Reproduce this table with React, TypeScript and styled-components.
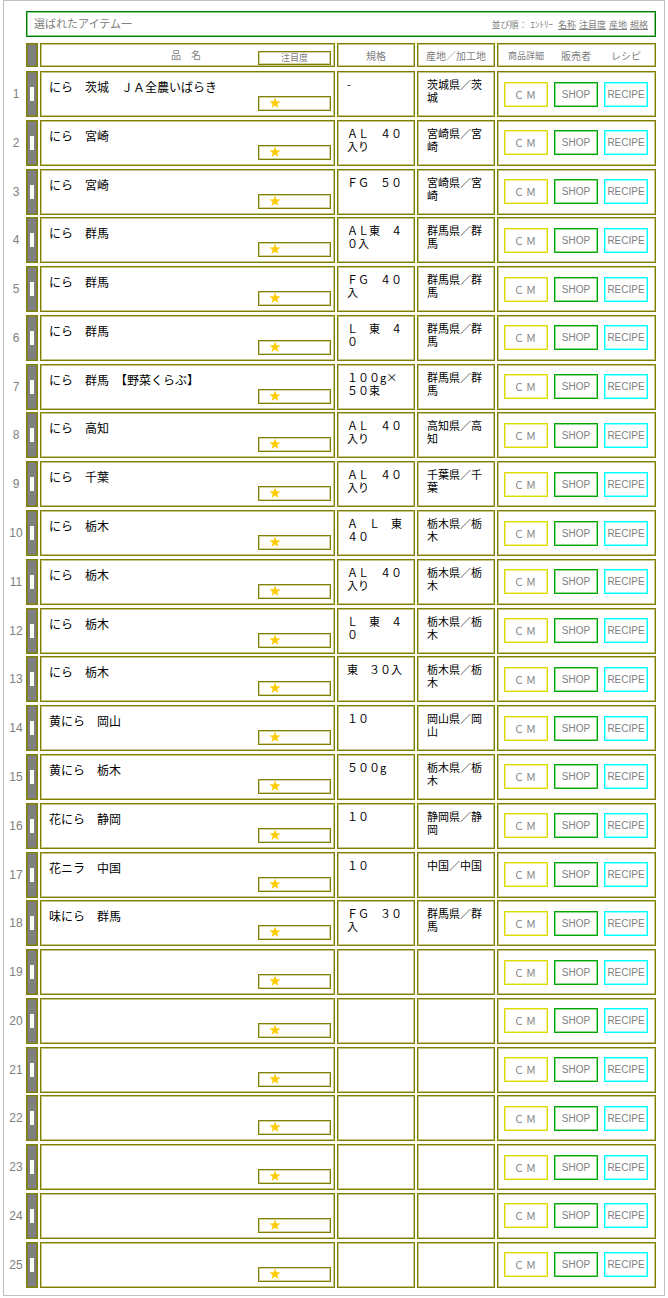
import styled, { createGlobalStyle, css } from "styled-components";

type Item = { name: string; spec: string; origin: string };

const items: Item[] = [
  { name: "にら　茨城　ＪＡ全農いばらき", spec: "-", origin: "茨城県／茨城" },
  { name: "にら　宮崎", spec: "ＡＬ　４０入り", origin: "宮崎県／宮崎" },
  { name: "にら　宮崎", spec: "ＦＧ　５０", origin: "宮崎県／宮崎" },
  { name: "にら　群馬", spec: "ＡＬ東　４０入", origin: "群馬県／群馬" },
  { name: "にら　群馬", spec: "ＦＧ　４０入", origin: "群馬県／群馬" },
  { name: "にら　群馬", spec: "Ｌ　東　４０", origin: "群馬県／群馬" },
  { name: "にら　群馬　【野菜くらぶ】", spec: "１００g×５０束", origin: "群馬県／群馬" },
  { name: "にら　高知", spec: "ＡＬ　４０入り", origin: "高知県／高知" },
  { name: "にら　千葉", spec: "ＡＬ　４０入り", origin: "千葉県／千葉" },
  { name: "にら　栃木", spec: "Ａ　Ｌ　東　４０", origin: "栃木県／栃木" },
  { name: "にら　栃木", spec: "ＡＬ　４０入り", origin: "栃木県／栃木" },
  { name: "にら　栃木", spec: "Ｌ　東　４０", origin: "栃木県／栃木" },
  { name: "にら　栃木", spec: "東　３０入", origin: "栃木県／栃木" },
  { name: "黄にら　岡山", spec: "１０", origin: "岡山県／岡山" },
  { name: "黄にら　栃木", spec: "５００g", origin: "栃木県／栃木" },
  { name: "花にら　静岡", spec: "１０", origin: "静岡県／静岡" },
  { name: "花ニラ　中国", spec: "１０", origin: "中国／中国" },
  { name: "味にら　群馬", spec: "ＦＧ　３０入", origin: "群馬県／群馬" },
];

const rows: Item[] = Array.from({ length: 25 }, (_, i) => items[i] ?? { name: "", spec: "", origin: "" });

// 1px line plus a half-tone inner pixel, reads like the 1.5px lines of the original
const line = (color: string, soft: string) => css`
  border: 1px solid ${color};
  box-shadow: inset 0 0 0 1px ${soft};
`;

const GlobalStyle = createGlobalStyle`
  body {
    margin: 0;
    background: #ffffff;
  }
`;

const Star = () => (
  <svg width="12" height="12" viewBox="0 0 24 24">
    <polygon
      points="12,1 14.9,8.6 23,8.9 16.6,13.9 18.9,21.8 12,17.2 5.1,21.8 7.4,13.9 1,8.9 9.1,8.6"
      fill="#ffcc00"
    />
  </svg>
);

const App = () => {
  return (
    <>
      <GlobalStyle />
      <Frame>
        <TitleBar>
          <Title>選ばれたアイテム一</Title>
          <SortBox>
            並び順：<Half>ｴﾝﾄﾘｰ</Half>
            <SortLink>名称</SortLink>
            <SortLink>注目度</SortLink>
            <SortLink>産地</SortLink>
            <SortLink>規格</SortLink>
          </SortBox>
        </TitleBar>

        <HeaderRow>
          <span />
          <Bar />
          <NameHead>
            <span />
            <HeadLabel>品　名</HeadLabel>
            <AttentionBox>注目度</AttentionBox>
          </NameHead>
          <HeadCell>規格</HeadCell>
          <HeadCell>産地／加工地</HeadCell>
          <ButtonsHead>
            <HeadLabel $size={9}>商品詳細</HeadLabel>
            <HeadLabel>販売者</HeadLabel>
            <HeadLabel>レシピ</HeadLabel>
          </ButtonsHead>
        </HeaderRow>

        <List>
          {rows.map((row, i) => (
            <Row key={i}>
              <RowNumber>{i + 1}</RowNumber>
              <Bar>
                <Handle />
              </Bar>
              <NameCell>
                <NameText>{row.name}</NameText>
                <StarBox>
                  <Star />
                </StarBox>
              </NameCell>
              <TextCell>{row.spec}</TextCell>
              <TextCell>{row.origin}</TextCell>
              <ButtonsCell>
                <LinkButton $color="#dcdc00" $soft="rgba(220,220,0,0.45)" $spaced>
                  ＣＭ
                </LinkButton>
                <LinkButton $color="#00a800" $soft="rgba(0,168,0,0.45)">
                  SHOP
                </LinkButton>
                <LinkButton $color="#00ffff" $soft="rgba(0,255,255,0.45)">
                  RECIPE
                </LinkButton>
              </ButtonsCell>
            </Row>
          ))}
        </List>
      </Frame>
    </>
  );
};

const Frame = styled.div`
  margin-left: 3px;
  width: 662px;
  box-sizing: border-box;
  border: 1px solid #c0c0c0;
  padding: 10px 0 7px 4px;
  font-family: "Noto Sans CJK JP", "Liberation Sans", sans-serif;
`;

const TitleBar = styled.div`
  margin-left: 18px;
  width: 630px;
  height: 26px;
  box-sizing: border-box;
  ${line("#008000", "rgba(0,128,0,0.45)")}
  display: flex;
  align-items: center;
  justify-content: space-between;
  padding: 0 7px 0 7px;
`;

const Title = styled.span`
  font-size: 11px;
  color: #808080;
  margin-top: -2px;
`;

const SortBox = styled.span`
  display: flex;
  align-items: center;
  gap: 3px;
  font-size: 9px;
  color: #808080;
`;

const Half = styled.span`
  margin-right: 2px;
`;

const SortLink = styled.span`
  text-decoration: underline;
`;

const Columns = styled.div`
  display: grid;
  grid-template-columns: 16px 12px 295px 78px 78px 159px;
  column-gap: 2px;
`;

const HeaderRow = styled(Columns)`
  margin-top: 6px;
  height: 24px;
`;

const Row = styled(Columns)`
  height: 46px;
`;

const List = styled.div`
  display: flex;
  flex-direction: column;
  gap: 2.79px;
  margin-top: 4px;
`;

const Cell = styled.div`
  box-sizing: border-box;
  ${line("#808000", "rgba(128,128,0,0.45)")}
`;

const Bar = styled(Cell)`
  background: #808080;
  display: flex;
  align-items: center;
  padding-left: 3px;
`;

const Handle = styled.div`
  width: 4px;
  height: 14px;
  background: #ffffff;
`;

const RowNumber = styled.div`
  display: flex;
  align-items: center;
  justify-content: center;
  font-family: "Liberation Sans", sans-serif;
  font-size: 12px;
  color: #808080;
`;

const NameHead = styled(Cell)`
  display: grid;
  grid-template-columns: 1fr auto 1fr;
  align-items: center;
  padding: 0 3px 1px 0;
`;

const HeadLabel = styled.span<{ $size?: number }>`
  font-size: ${({ $size }) => $size ?? 10}px;
  color: #808080;
  text-align: center;
  white-space: nowrap;
`;

const AttentionBox = styled.span`
  justify-self: end;
  align-self: end;
  width: 73px;
  height: 14px;
  box-sizing: border-box;
  ${line("#808000", "rgba(128,128,0,0.35)")}
  font-size: 9px;
  line-height: 12px;
  color: #808080;
  text-align: center;
`;

const HeadCell = styled(Cell)`
  display: flex;
  align-items: center;
  justify-content: center;
  font-size: 10px;
  color: #808080;
`;

const ButtonsHead = styled(Cell)`
  display: grid;
  grid-template-columns: repeat(3, 44px);
  column-gap: 6px;
  align-items: center;
  padding-left: 6px;
`;

const NameCell = styled(Cell)`
  display: flex;
  flex-direction: column;
  justify-content: space-between;
  padding: 8px 3px 5px 8px;
`;

const NameText = styled.div`
  font-size: 12px;
  line-height: 14px;
  color: #000000;
`;

const StarBox = styled.div`
  align-self: flex-end;
  width: 73px;
  height: 15px;
  box-sizing: border-box;
  ${line("#808000", "rgba(128,128,0,0.35)")}
  display: flex;
  align-items: flex-end;
  padding-left: 10px;
  padding-bottom: 1px;
`;

const TextCell = styled(Cell)`
  padding: 6px 10px 0 9px;
  font-size: 11px;
  line-height: 13px;
  color: #000000;
  word-break: break-all;
`;

const ButtonsCell = styled(Cell)`
  display: flex;
  align-items: center;
  gap: 6px;
  padding-left: 6px;
`;

const LinkButton = styled.div<{ $color: string; $soft: string; $spaced?: boolean }>`
  width: 44px;
  height: 25px;
  box-sizing: border-box;
  ${({ $color, $soft }) => line($color, $soft)}
  display: flex;
  align-items: center;
  justify-content: center;
  font-family: "Liberation Sans", "Noto Sans CJK JP", sans-serif;
  font-size: 10px;
  letter-spacing: ${({ $spaced }) => ($spaced ? "2px" : "0")};
  color: #808080;
`;

export default App;
